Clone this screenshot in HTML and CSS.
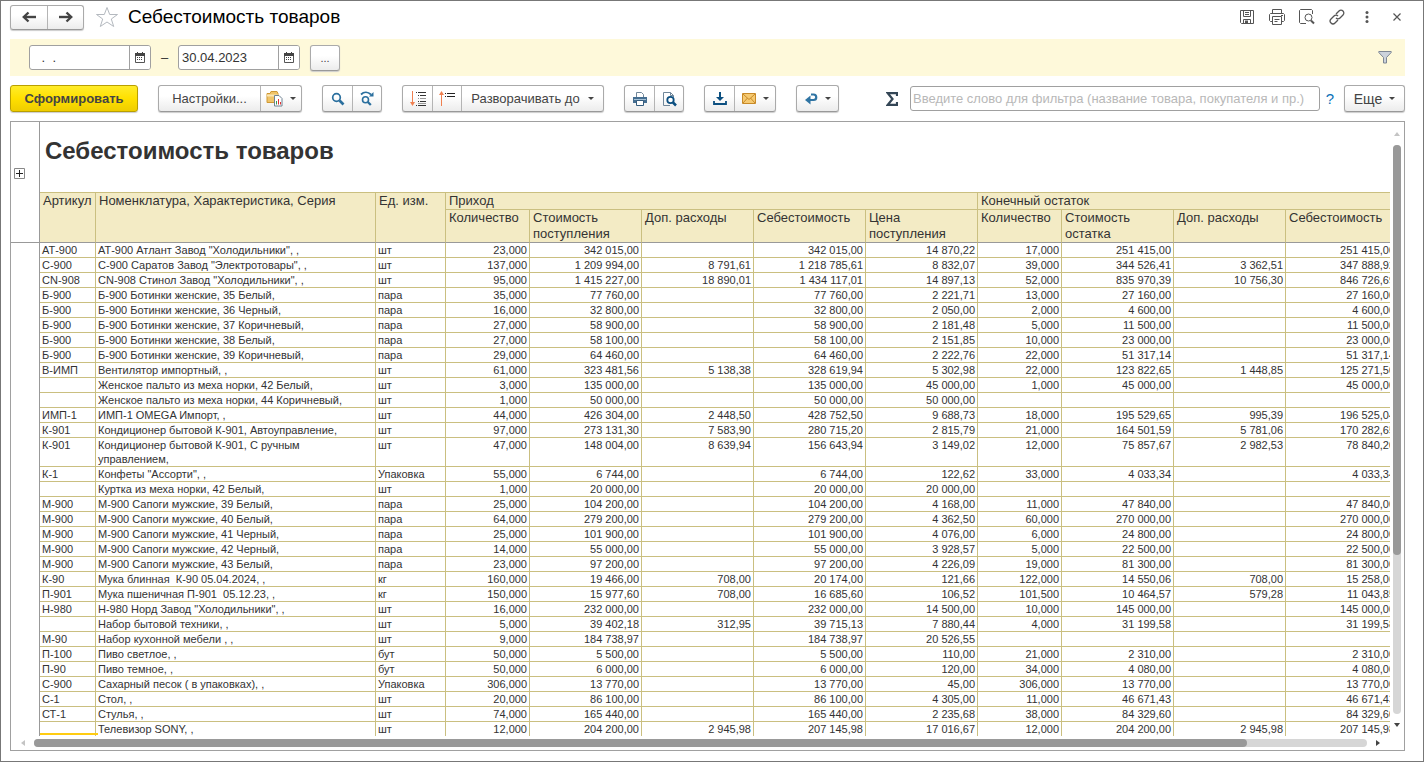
FILE: index.html
```html
<!DOCTYPE html>
<html lang="ru">
<head>
<meta charset="utf-8">
<title>Себестоимость товаров</title>
<link rel="stylesheet" href="styles.css">
</head>
<body>
<main class="window">
  <header class="titlebar">
    <div class="group nav">
      <button class="btn" aria-label="Назад"><svg width="14" height="12" viewBox="0 0 14 12"><path d="M2 6h12" stroke="#444" stroke-width="2.400"/><path d="M6.500 1.500L1.800 6L6.500 10.500" fill="none" stroke="#444" stroke-width="2.400"/></svg></button>
      <button class="btn" aria-label="Вперед"><svg width="14" height="12" viewBox="0 0 14 12"><path d="M0 6h12" stroke="#444" stroke-width="2.400"/><path d="M7.500 1.500L12.200 6L7.500 10.500" fill="none" stroke="#444" stroke-width="2.400"/></svg></button>
    </div>
    <button class="plain star" aria-label="В избранное"><svg width="24" height="22" viewBox="0 0 24 22"><path d="M12 1.500L14.700 8.500H22.500L16.300 13L18.700 20.500L12 16L5.300 20.500L7.700 13L1.500 8.500H9.300Z" fill="#fff" stroke="#b4b9bf"/></svg></button>
    <h1 class="caption">Себестоимость товаров</h1>
    <div class="tools">
      <button class="plain" aria-label="Сохранить"><svg width="16" height="16" viewBox="0 0 16 16" fill="none" stroke="#555"><path d="M1.500 1.500h13v13h-12l-1-1zM4.500 1.500v6h7v-6M6 3.500h4M6 5.500h4M4.500 14.500v-4h7v4"/><path d="M6 11.500h3v3H6z" fill="#555" stroke="none"/></svg></button>
      <button class="plain" aria-label="Печать"><svg width="16" height="16" viewBox="0 0 16 16" fill="none" stroke="#555"><path d="M3.500 4.500v-4h9v4M3.500 12.500h-2l-1-1v-6l1-1h13l1 1v6l-1 1h-2M3.500 7.500h9v8h-9zM5.500 10.500h5M5.500 12.500h3M12 6.500h2"/></svg></button>
      <button class="plain" aria-label="Просмотр"><svg width="16" height="16" viewBox="0 0 16 16" fill="none" stroke="#555"><path d="M13.500 5V1.500l-1-1h-11l-1 1v12l1 1H7"/><circle cx="9.500" cy="8.500" r="3.500"/><path d="M12 11.500l3 3" stroke-width="2"/></svg></button>
      <button class="plain" aria-label="Ссылка"><svg width="16" height="16" viewBox="0 0 16 16" fill="none" stroke="#555" stroke-width="1.300"><path d="M7 5l3-3a2.800 2.800 0 0 1 4 4l-3 3a2.800 2.800 0 0 1-4 0M9 11l-3 3a2.800 2.800 0 0 1-4-4l3-3a2.800 2.800 0 0 1 4 0"/></svg></button>
      <button class="plain" aria-label="Меню"><svg width="16" height="16" viewBox="0 0 16 16" fill="#555"><circle cx="8" cy="3.500" r="1.500"/><circle cx="8" cy="8" r="1.500"/><circle cx="8" cy="12.500" r="1.500"/></svg></button>
      <button class="plain" aria-label="Закрыть"><svg width="16" height="16" viewBox="0 0 16 16"><path d="M4.500 4.500l7 7M11.500 4.500l-7 7" stroke="#555" stroke-width="1.200"/></svg></button>
    </div>
  </header>

  <section class="period">
    <div class="date">
      <input class="date-input empty" type="text" value=" .  ." aria-label="Начало периода">
      <button class="date-btn" aria-label="Выбрать начало"><svg width="10" height="11" viewBox="0 0 10 11"><path d="M.5 1.500h9v9h-9z" fill="#fff" stroke="#555"/><path d="M0 1h10v3H0zM2 0h1v2H2zM7 0h1v2H7z" fill="#444"/><path d="M2 5.500h6M2 7.500h6" stroke="#444" stroke-dasharray="1 1"/></svg></button>
    </div>
    <span class="dash">–</span>
    <div class="date">
      <input class="date-input" type="text" value="30.04.2023" aria-label="Конец периода">
      <button class="date-btn" aria-label="Выбрать конец"><svg width="10" height="11" viewBox="0 0 10 11"><path d="M.5 1.500h9v9h-9z" fill="#fff" stroke="#555"/><path d="M0 1h10v3H0zM2 0h1v2H2zM7 0h1v2H7z" fill="#444"/><path d="M2 5.500h6M2 7.500h6" stroke="#444" stroke-dasharray="1 1"/></svg></button>
    </div>
    <div class="group more"><button class="btn small">...</button></div>
    <button class="plain funnel" aria-label="Фильтр"><svg width="14" height="13" viewBox="0 0 14 13"><path d="M.8.500h12.400v1L8.500 6.500v5.500h-3V6.500L.8 1.500z" fill="#ccd3dc" stroke="#7d8794"/></svg></button>
  </section>

  <section class="toolbar">
    <button class="primary">Сформировать</button>
    <div class="group">
      <button class="btn settings">Настройки...</button>
      <button class="btn icon-menu" aria-label="Варианты"><svg width="17" height="17" viewBox="0 0 17 17"><path d="M1 3.500h3l1-2h6l1 2v9H1z" fill="#f0c468" stroke="#cf9834"/><path d="M1 5.500h11" stroke="#fbe7b4" stroke-width="2"/><path d="M8.500 5.500h4.500l3 3v7.500H8.500z" fill="#fff" stroke="#6f8292"/><path d="M10.500 11v3.500" stroke="#3a9a55"/><path d="M12.500 9v5.500" stroke="#d33"/><path d="M14.500 12v2.500" stroke="#d33"/></svg><i class="caret"></i></button>
    </div>
    <div class="group">
      <button class="btn icon" aria-label="Найти"><svg width="14" height="14" viewBox="0 0 14 14" fill="none" stroke="#2a6f9e"><circle cx="5.500" cy="5.500" r="3.800" stroke-width="1.700"/><path d="M8.500 8.500l4 4" stroke-width="2.600"/></svg></button>
      <button class="btn icon" aria-label="Найти далее"><svg width="14" height="15" viewBox="0 0 14 15" fill="none" stroke="#2a6f9e"><path d="M1 3.500C4 .5 8 .8 11 3.500" stroke-width="1.800"/><path d="M13.500 1v4.500H9z" fill="#2a6f9e" stroke="none"/><circle cx="5.500" cy="8.800" r="3" stroke-width="1.600"/><path d="M7.800 11l3 3" stroke-width="2.300"/></svg></button>
    </div>
    <div class="group">
      <button class="btn icon" aria-label="Развернуть"><svg width="16" height="16" viewBox="0 0 16 16"><path d="M2.500 0v14" stroke="#f08050"/><path d="M0 11h5l-2.500 4z" fill="#f08050"/><path d="M6 1.500h1M8 1.500h8M8 4.500h1M10 4.500h6M8 10.500h1M10 10.500h6M6 14.500h1M8 14.500h8" stroke="#333"/><path d="M8 7.500h1M10 7.500h6M8 12.500h8" stroke="#999"/></svg></button>
      <button class="btn icon" aria-label="Свернуть"><svg width="16" height="16" viewBox="0 0 16 16"><path d="M2.500 1v14" stroke="#f08050"/><path d="M0 4h5L2.500 0z" fill="#f08050"/><path d="M6 2.500h1M8 2.500h8M6 5.500h1M8 5.500h8" stroke="#222"/></svg></button>
      <button class="btn expand">Разворачивать до<i class="caret"></i></button>
    </div>
    <div class="group">
      <button class="btn icon" aria-label="Печать отчета"><svg width="14" height="14" viewBox="0 0 14 14"><path d="M3.500 6V.5h5l2 2V6" fill="#fff" stroke="#71879a"/><path d="M0 5h14v6H0z" fill="#456e91"/><path d="M1 7.500h12" stroke="#a5c1d6"/><path d="M3.500 8.500h7v5h-7z" fill="#fff" stroke="#365d7e"/></svg></button>
      <button class="btn icon" aria-label="Предварительный просмотр"><svg width="15" height="16" viewBox="0 0 15 16" fill="none"><path d="M8 14.500H1.500V1.500h7l3 3V6M8.500 1.500v3h3" stroke="#71879a"/><circle cx="8.500" cy="9" r="3.200" fill="#fff" stroke="#0c4f80" stroke-width="1.800"/><path d="M11 11.500l3 3" stroke="#0c4f80" stroke-width="2.500"/></svg></button>
    </div>
    <div class="group">
      <button class="btn icon" aria-label="Сохранить отчет"><svg width="14" height="13" viewBox="0 0 14 13"><path d="M6 0h2v5h3L7 9L3 5h3z" fill="#0c4f80"/><path d="M1 9v3h12V9" fill="none" stroke="#0c4f80" stroke-width="1.800"/></svg></button>
      <button class="btn icon-menu" aria-label="Отправить"><svg width="14" height="11" viewBox="0 0 14 11"><path d="M.5.500h13v10H.5z" fill="#f6ca72" stroke="#c88a28"/><path d="M1 1l6 5.500L13 1M1 10l4.500-5M13 10L8.500 5" fill="none" stroke="#c88a28"/></svg><i class="caret"></i></button>
    </div>
    <div class="group">
      <button class="btn icon-menu" aria-label="Вернуться"><svg width="13" height="12" viewBox="0 0 13 12"><path d="M6 1.500h2.500a2.700 2.700 0 0 1 0 5.500H4" fill="none" stroke="#2f74a3" stroke-width="2.200"/><path d="M5.500 2.500v9L0 7z" fill="#2f74a3"/></svg><i class="caret"></i></button>
    </div>
    <svg class="sigma" width="12" height="14" viewBox="0 0 12 14"><path d="M11 4V1.200H1.800L6.500 7l-4.700 5.800H11V10" fill="none" stroke="#344656" stroke-width="2.200"/></svg>
    <input class="filter" type="text" placeholder="Введите слово для фильтра (название товара, покупателя и пр.)" aria-label="Фильтр">
    <button class="plain help">?</button>
    <div class="group"><button class="btn else">Еще<i class="caret"></i></button></div>
  </section>

  <section class="report">
    <div class="gutter">
      <div class="gutter-top"><button class="plus" aria-label="Развернуть группу"><svg width="11" height="11" viewBox="0 0 11 11"><path d="M.5.500h10v10H.5z" fill="#fff" stroke="#888"/><path d="M2 5.500h7M5.500 2v7" stroke="#222"/></svg></button></div>
    </div>
    <div class="sheet">
      <h2 class="report-title">Себестоимость товаров</h2>
      <table class="grid">
        <colgroup><col class="c-art"><col class="c-name"><col class="c-unit"><col class="c-qty"><col class="c-sum"><col class="c-sum"><col class="c-sum"><col class="c-sum"><col class="c-qty"><col class="c-sum"><col class="c-sum"><col class="c-sum"></colgroup>
        <thead>
          <tr class="h1"><th rowspan="2">Артикул</th><th rowspan="2">Номенклатура, Характеристика, Серия</th><th rowspan="2">Ед. изм.</th><th colspan="5">Приход</th><th colspan="4">Конечный остаток</th></tr>
          <tr class="h2"><th>Количество</th><th>Стоимость<br>поступления</th><th>Доп. расходы</th><th>Себестоимость</th><th>Цена<br>поступления</th><th>Количество</th><th>Стоимость<br>остатка</th><th>Доп. расходы</th><th>Себестоимость</th></tr>
        </thead>
        <tbody>
          <tr><td>АТ-900<td>АТ-900 Атлант Завод "Холодильники", ,<td>шт<td>23,000<td>342 015,00<td><td>342 015,00<td>14 870,22<td>17,000<td>251 415,00<td><td>251 415,00</tr>
          <tr><td>С-900<td>С-900 Саратов Завод "Электротовары", ,<td>шт<td>137,000<td>1 209 994,00<td>8 791,61<td>1 218 785,61<td>8 832,07<td>39,000<td>344 526,41<td>3 362,51<td>347 888,92</tr>
          <tr><td>CN-908<td>CN-908 Стинол Завод "Холодильники", ,<td>шт<td>95,000<td>1 415 227,00<td>18 890,01<td>1 434 117,01<td>14 897,13<td>52,000<td>835 970,39<td>10 756,30<td>846 726,69</tr>
          <tr><td>Б-900<td>Б-900 Ботинки женские, 35 Белый,<td>пара<td>35,000<td>77 760,00<td><td>77 760,00<td>2 221,71<td>13,000<td>27 160,00<td><td>27 160,00</tr>
          <tr><td>Б-900<td>Б-900 Ботинки женские, 36 Черный,<td>пара<td>16,000<td>32 800,00<td><td>32 800,00<td>2 050,00<td>2,000<td>4 600,00<td><td>4 600,00</tr>
          <tr><td>Б-900<td>Б-900 Ботинки женские, 37 Коричневый,<td>пара<td>27,000<td>58 900,00<td><td>58 900,00<td>2 181,48<td>5,000<td>11 500,00<td><td>11 500,00</tr>
          <tr><td>Б-900<td>Б-900 Ботинки женские, 38 Белый,<td>пара<td>27,000<td>58 100,00<td><td>58 100,00<td>2 151,85<td>10,000<td>23 000,00<td><td>23 000,00</tr>
          <tr><td>Б-900<td>Б-900 Ботинки женские, 39 Коричневый,<td>пара<td>29,000<td>64 460,00<td><td>64 460,00<td>2 222,76<td>22,000<td>51 317,14<td><td>51 317,14</tr>
          <tr><td>В-ИМП<td>Вентилятор импортный, ,<td>шт<td>61,000<td>323 481,56<td>5 138,38<td>328 619,94<td>5 302,98<td>22,000<td>123 822,65<td>1 448,85<td>125 271,50</tr>
          <tr><td><td>Женское пальто из меха норки, 42 Белый,<td>шт<td>3,000<td>135 000,00<td><td>135 000,00<td>45 000,00<td>1,000<td>45 000,00<td><td>45 000,00</tr>
          <tr><td><td>Женское пальто из меха норки, 44 Коричневый,<td>шт<td>1,000<td>50 000,00<td><td>50 000,00<td>50 000,00<td><td><td><td></tr>
          <tr><td>ИМП-1<td>ИМП-1 OMEGA Импорт, ,<td>шт<td>44,000<td>426 304,00<td>2 448,50<td>428 752,50<td>9 688,73<td>18,000<td>195 529,65<td>995,39<td>196 525,04</tr>
          <tr><td>К-901<td>Кондиционер бытовой К-901, Автоуправление,<td>шт<td>97,000<td>273 131,30<td>7 583,90<td>280 715,20<td>2 815,79<td>21,000<td>164 501,59<td>5 781,06<td>170 282,65</tr>
          <tr><td>К-901<td>Кондиционер бытовой К-901, С ручным<br>управлением,<td>шт<td>47,000<td>148 004,00<td>8 639,94<td>156 643,94<td>3 149,02<td>12,000<td>75 857,67<td>2 982,53<td>78 840,20</tr>
          <tr><td>К-1<td>Конфеты "Ассорти", ,<td>Упаковка<td>55,000<td>6 744,00<td><td>6 744,00<td>122,62<td>33,000<td>4 033,34<td><td>4 033,34</tr>
          <tr><td><td>Куртка из меха норки, 42 Белый,<td>шт<td>1,000<td>20 000,00<td><td>20 000,00<td>20 000,00<td><td><td><td></tr>
          <tr><td>М-900<td>М-900 Сапоги мужские, 39 Белый,<td>пара<td>25,000<td>104 200,00<td><td>104 200,00<td>4 168,00<td>11,000<td>47 840,00<td><td>47 840,00</tr>
          <tr><td>М-900<td>М-900 Сапоги мужские, 40 Белый,<td>пара<td>64,000<td>279 200,00<td><td>279 200,00<td>4 362,50<td>60,000<td>270 000,00<td><td>270 000,00</tr>
          <tr><td>М-900<td>М-900 Сапоги мужские, 41 Черный,<td>пара<td>25,000<td>101 900,00<td><td>101 900,00<td>4 076,00<td>6,000<td>24 800,00<td><td>24 800,00</tr>
          <tr><td>М-900<td>М-900 Сапоги мужские, 42 Черный,<td>пара<td>14,000<td>55 000,00<td><td>55 000,00<td>3 928,57<td>5,000<td>22 500,00<td><td>22 500,00</tr>
          <tr><td>М-900<td>М-900 Сапоги мужские, 43 Белый,<td>пара<td>23,000<td>97 200,00<td><td>97 200,00<td>4 226,09<td>19,000<td>81 300,00<td><td>81 300,00</tr>
          <tr><td>К-90<td>Мука блинная  К-90 05.04.2024, ,<td>кг<td>160,000<td>19 466,00<td>708,00<td>20 174,00<td>121,66<td>122,000<td>14 550,06<td>708,00<td>15 258,06</tr>
          <tr><td>П-901<td>Мука пшеничная П-901  05.12.23, ,<td>кг<td>150,000<td>15 977,60<td>708,00<td>16 685,60<td>106,52<td>101,500<td>10 464,57<td>579,28<td>11 043,85</tr>
          <tr><td>Н-980<td>Н-980 Норд Завод "Холодильники", ,<td>шт<td>16,000<td>232 000,00<td><td>232 000,00<td>14 500,00<td>10,000<td>145 000,00<td><td>145 000,00</tr>
          <tr><td><td>Набор бытовой техники, ,<td>шт<td>5,000<td>39 402,18<td>312,95<td>39 715,13<td>7 880,44<td>4,000<td>31 199,58<td><td>31 199,58</tr>
          <tr><td>М-90<td>Набор кухонной мебели , ,<td>шт<td>9,000<td>184 738,97<td><td>184 738,97<td>20 526,55<td><td><td><td></tr>
          <tr><td>П-100<td>Пиво светлое, ,<td>бут<td>50,000<td>5 500,00<td><td>5 500,00<td>110,00<td>21,000<td>2 310,00<td><td>2 310,00</tr>
          <tr><td>П-90<td>Пиво темное, ,<td>бут<td>50,000<td>6 000,00<td><td>6 000,00<td>120,00<td>34,000<td>4 080,00<td><td>4 080,00</tr>
          <tr><td>С-900<td>Сахарный песок ( в упаковках), ,<td>Упаковка<td>306,000<td>13 770,00<td><td>13 770,00<td>45,00<td>306,000<td>13 770,00<td><td>13 770,00</tr>
          <tr><td>С-1<td>Стол, ,<td>шт<td>20,000<td>86 100,00<td><td>86 100,00<td>4 305,00<td>11,000<td>46 671,43<td><td>46 671,43</tr>
          <tr><td>СТ-1<td>Стулья, ,<td>шт<td>74,000<td>165 440,00<td><td>165 440,00<td>2 235,68<td>38,000<td>84 329,60<td><td>84 329,60</tr>
          <tr><td class="selected"><td>Телевизор SONY, ,<td>шт<td>12,000<td>204 200,00<td>2 945,98<td>207 145,98<td>17 016,67<td>12,000<td>204 200,00<td>2 945,98<td>207 145,98</tr>
        </tbody>
      </table>
    </div>
    <div class="vscroll"><i class="arrow up"></i><div class="track"><div class="thumb"></div></div><i class="arrow down"></i></div>
    <div class="hscroll"><i class="arrow left"></i><div class="track"><div class="thumb"></div></div><i class="arrow right"></i></div>
  </section>
</main>
</body>
</html>
```
FILE: styles.css
```css
* { box-sizing: border-box; }
body { margin: 0; background: #fff; color: #333; font: 13px "Liberation Sans", Arial, sans-serif; }
button, input { font: inherit; color: inherit; margin: 0; }
button { padding: 0; }
svg { display: block; flex: none; }

.window { height: 100vh; min-height: 400px; display: flex; flex-direction: column; border: 1px solid #777; padding: 0 18px 10px 9px; }

.plain { background: none; border: 0; display: flex; align-items: center; justify-content: center; }
.group { display: flex; flex: none; height: 27px; border: 1px solid #aaa; border-bottom-color: #999; border-radius: 3px; background: linear-gradient(#fff 40%, #ececec); box-shadow: 0 1px 1px #ccc; }
.btn { display: flex; align-items: center; justify-content: center; background: none; border: 0; color: #444; font-size: 13px; white-space: nowrap; }
.btn + .btn { border-left: 1px solid #b4b4b4; }
.caret { flex: none; border: 3px solid transparent; border-top-color: #444; border-bottom: 0; }

.titlebar { display: flex; align-items: center; height: 38px; flex: none; padding: 0 0 6px; }
.nav { height: 25px; }
.nav .btn { width: 36px; }
.star { margin-left: 11px; }
.caption { margin: 0 0 0 9px; color: #000; font-size: 19px; line-height: 24px; font-weight: 400; white-space: nowrap; }
.tools { display: flex; gap: 14px; margin-left: auto; }

.period { display: flex; align-items: center; height: 37px; flex: none; padding: 0 13px 0 19px; background: #fef9da; }
.date { display: flex; width: 122px; height: 25px; border: 1px solid #a0a0a0; border-radius: 3px; background: #fff; overflow: hidden; }
.date-input { flex: 1; min-width: 0; padding: 0 3px; border: 0; background: none; font-size: 13px; }
.empty { padding-left: 8px; }
.date-btn { width: 21px; border: 0; border-left: 1px solid #a0a0a0; background: #fff; display: flex; align-items: center; justify-content: center; }
.dash { width: 27px; text-align: center; }
.more { margin-left: 10px; height: 26px; }
.small { width: 28px; font-size: 11px; }
.funnel { margin-left: auto; }

.toolbar { display: flex; align-items: center; height: 45px; flex: none; gap: 20px; }
.primary { width: 128px; height: 27px; flex: none; border: 1px solid #b99f00; border-radius: 3px; background: linear-gradient(#ffec2a, #ffe000 50%, #efcd00); box-shadow: 0 1px 1px #ccc; font-weight: 700; font-size: 13px; color: #444; }
.settings { width: 101px; }
.icon { width: 29px; }
.icon-menu { width: 41px; gap: 7px; }
.expand { width: 142px; gap: 8px; }
.sigma { margin-left: 27px; margin-right: -8px; }
.filter { flex: 1; min-width: 0; height: 25px; padding: 0 2px; border: 1px solid #a0a0a0; border-radius: 3px; }
.filter::placeholder { color: #b8b8b8; opacity: 1; }
.help { width: 8px; margin: 0 -10px 0 -14px; color: #0b72b8; font-size: 15px; }
.else { width: 59px; gap: 7px; font-size: 14px; }

.report { flex: 1; min-height: 0; display: grid; grid-template: minmax(0, 1fr) 14px / 29px minmax(0, 1fr) 14px; border: 1px solid #a0a0a0; }
.gutter { border-right: 1px solid #999; }
.gutter-top { height: 121px; border-bottom: 1px solid #999; padding: 46px 0 0 3px; }
.plus { display: block; border: 0; background: none; }
.sheet { overflow: hidden; }
.report-title { height: 70px; margin: 0; padding: 13px 0 0 5px; font-size: 24px; line-height: 32px; color: #333; }

.grid { width: 1358px; table-layout: fixed; border-collapse: separate; border-spacing: 0; }
.c-art { width: 56px; }
.c-name { width: 280px; }
.c-unit { width: 70px; }
.c-qty { width: 84px; }
.c-sum { width: 112px; }
.grid th { padding: 0 2px 0 3px; text-align: left; vertical-align: top; font-weight: 400; font-size: 13px; line-height: 16px; white-space: nowrap; background: #f3ebc5; border: 0 solid #cabf80; border-width: 0 1px 1px 0; }
.grid .h1 th { border-top-width: 1px; }
.grid .h2 th, .grid th[rowspan] { border-bottom-color: #999; }
.grid td { height: 15px; padding: 0 2px; vertical-align: top; font-size: 11px; line-height: 14px; white-space: pre; border: 0 solid #cabf80; border-width: 0 1px 1px 0; }
.grid td:nth-child(n+4) { text-align: right; }
.grid .selected { position: relative; }
.selected::after { content: ""; position: absolute; left: 0; right: -3px; bottom: 1px; height: 2px; background: #fc1; }

.track { flex: 1; background: #d6d6d6; border-radius: 4px; }
.thumb { background: #999; border-radius: 4px; }
.vscroll { display: flex; flex-direction: column; align-items: center; gap: 9px; padding: 10px 0 9px; }
.vscroll .track { width: 8px; }
.vscroll .thumb { height: 72%; }
.hscroll { grid-column: 1 / -1; display: flex; align-items: center; gap: 9px; padding: 0 24px 0 10px; }
.hscroll .track { height: 8px; }
.hscroll .thumb { width: 91%; height: 8px; }
.arrow { border: 3px solid transparent; }
.up { border-top: 0; border-bottom: 4px solid #c4c4c4; }
.down { border-bottom: 0; border-top: 4px solid #444; }
.left { border-left: 0; border-right: 4px solid #c4c4c4; }
.right { border-right: 0; border-left: 4px solid #444; }
```
